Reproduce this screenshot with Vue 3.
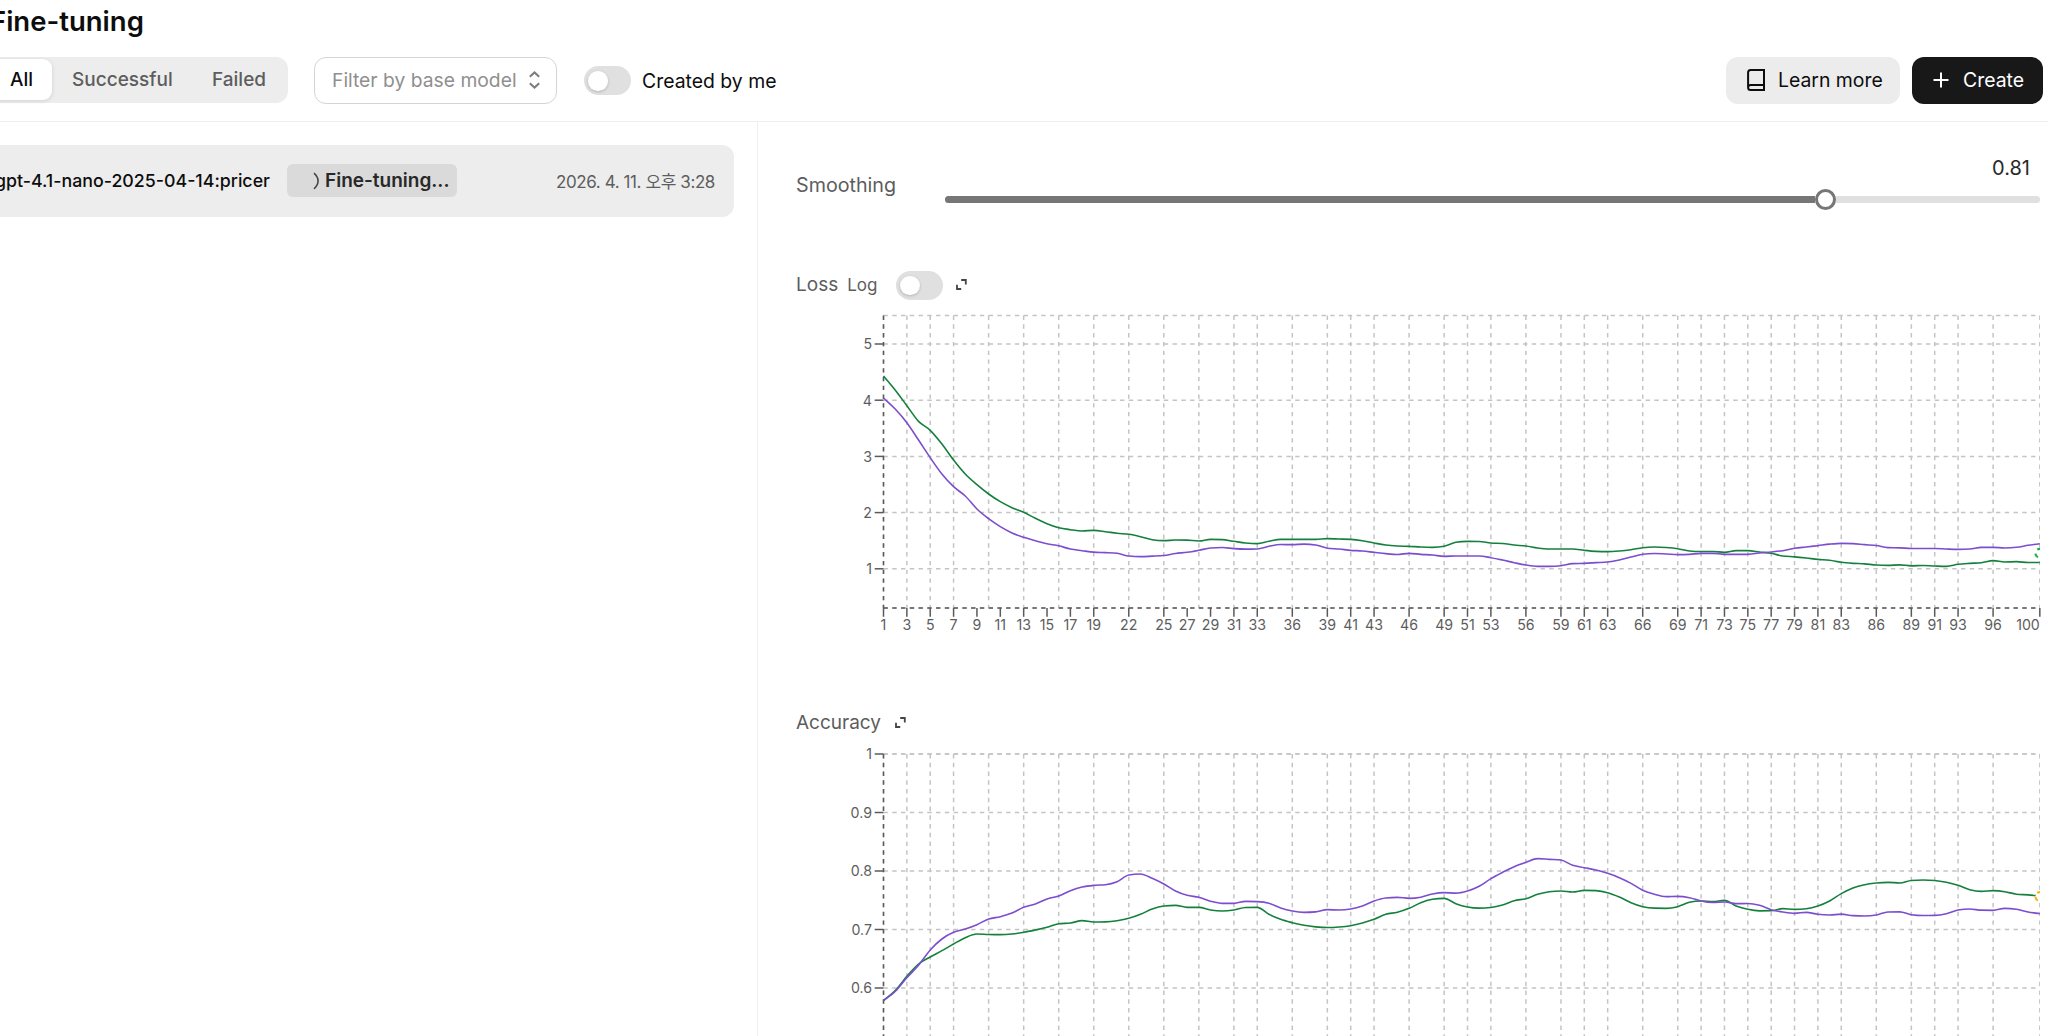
<script setup>
const lossTrain = [378,420,467,514,541,582,630,672,704,732,755,773,787,805,821,833,839,843,841,845,850,853,860,869,872,870,870.5,873,868,869,874,879,881,874,868,868,868,868,866,867,868,872,879,885,888,889,891,892,889,877,874,874.5,879,880.5,885,888,894,897,897,897,901,904,905,903,899,893,891,892.5,896,903,904.5,904.5,907,902,902,906,910,918,920.5,924,928,931,937,940,941.5,945,946,944.5,947.5,946.5,948,949,943,940,938,932,936,935,937.5,937.5]
const lossValid = [444,477,518,570,623,672,710,738,777,806,830,849,862,872.5,881.5,887.5,897,902,906.5,908,910,918,920,918.5,916.5,910.5,907,901,894,892.5,896,897.5,897,889,883.5,884,882.5,885,894.5,897,901,903,907,911,913.5,910,913,915,919,918,918,918,923,930,938,945,949,949,947,941,940,938,936,930,921,913,910.5,912,914,913,910,910,913,913,913,909,906,902,895,891,887,882.5,880,881,884,886.5,893,893.5,895.5,895.5,895.5,897,898,897,892,892,894,892,886,881]
const accTrain = [932,902,859,822,801,782,762,743,732,733.5,734,732,727,720,712,701,699,692,696,695.5,692,685,673,657,648,646,652,652,660,663,660,652.5,652,673,688,698,706,710.5,712.5,711,707,699,688,673,666.5,655,638,628,625,641,651,654.5,652.5,645,632,626,613,605,603,606,601,602,608,621,638,650,654.5,655,650,637,633,635,631,648,658,662.5,662,656,658,656,648,633,611,594,584,579,577,579,571.5,570,571.5,577,586,599,604,602,605,612.5,614.5,618]
const accValid = [932,904,863,826,780,747,727,717,704,687,680,669,652,642,627,618,602,591,586,584,575,555,552,565,582,603,616,622,633.5,640,640,634,635,640,654,663,667,665.5,659,660,657,648,633,624,622,625,621.5,612,608,609.5,603,589,566,547,530,517,506,508,510,526,533,540,550,563,580,601,613,620,619,623,633,637.5,636,641,640.5,646,659,666,670,667,673,675,672.5,677,678,675,666,665.5,674,676.5,676,671,660,657,660.5,661,655,658,666,671]

const gridSteps = [1,3,5,7,10,13,16,19,22,25,28,31,33,36,39,41,43,46,49,51,53,56,59,61,63,66,69,71,73,75,77,79,81,83,86,89,91,93,96,100]
const tickSteps = [1,3,5,7,9,11,13,15,17,19,22,25,27,29,31,33,36,39,41,43,46,49,51,53,56,59,61,63,66,69,71,73,75,77,79,81,83,86,89,91,93,96,100]

const STEP = 11.68
const LEFT = 87.5
const RIGHT = LEFT + 99 * STEP
const xOf = (step) => LEFT + (step - 1) * STEP

// Monotone cubic interpolation through evenly spaced samples
function curve(samples, offset) {
  const y = samples.map((v) => v / 3 - offset)
  const n = y.length
  const d = []
  for (let i = 0; i < n - 1; i++) d.push((y[i + 1] - y[i]) / STEP)
  const m = y.map((_, i) => {
    if (i === 0) return d[0]
    if (i === n - 1) return d[n - 2]
    if (d[i - 1] * d[i] <= 0) return 0
    return Math.sign(d[i]) * Math.min(Math.abs(d[i - 1]), Math.abs(d[i]), Math.abs(d[i - 1] + d[i]) / 4) * 2
  })
  let path = `M${LEFT},${y[0].toFixed(2)}`
  for (let i = 1; i < n; i++) {
    const x0 = xOf(i)
    const x1 = xOf(i + 1)
    const h = STEP / 3
    path += `C${(x0 + h).toFixed(2)},${(y[i - 1] + m[i - 1] * h).toFixed(2)} ${(x1 - h).toFixed(2)},${(y[i] - m[i] * h).toFixed(2)} ${x1.toFixed(2)},${y[i].toFixed(2)}`
  }
  return path
}

const charts = [
  {
    key: 'loss', title: 'Loss', log: true, top: 15.6, bottom: 308, height: 341, steps: tickSteps,
    ticks: [5, 4, 3, 2, 1].map((v) => ({ label: String(v), y: 325 - 56.2 * v })),
    train: curve(lossTrain, 50), valid: curve(lossValid, 50),
    dot: { y: 253.3, color: '#1fb14a' },
  },
  {
    key: 'acc', title: 'Accuracy', log: false, top: 16, bottom: 308.5, height: 298, steps: [],
    ticks: ['1', '0.9', '0.8', '0.7', '0.6'].map((label, i) => ({ label, y: 16 + 58.5 * i })),
    train: curve(accTrain, 48), valid: curve(accValid, 48),
    dot: { y: 158.6, color: '#f9b91c' },
  },
]
</script>

<template>
  <div class="page">
    <header class="header">
      <h1 class="title">Fine-tuning</h1>
      <div class="toolbar">
        <div class="tabs">
          <button class="tab active">All</button>
          <button class="tab successful">Successful</button>
          <button class="tab failed">Failed</button>
        </div>
        <button class="select">
          <span>Filter by base model</span>
          <svg width="13" height="18" viewBox="0 0 13 18"><path d="M1.8 5.8 6.5 1.4l4.7 4.4M1.8 12.2l4.7 4.4 4.7-4.4" /></svg>
        </button>
        <span class="switch"><i></i></span>
        <span class="mine">Created by me</span>
        <span class="spacer"></span>
        <button class="btn learn">
          <svg width="20" height="24" viewBox="0 0 20 24"><path d="M18 17H4.6a2.5 2.5 0 0 0-2.5 2.5M4.6 2H18v20H4.6a2.5 2.5 0 0 1-2.5-2.5v-15A2.5 2.5 0 0 1 4.6 2Z" /></svg>
          <span>Learn more</span>
        </button>
        <button class="btn create">
          <svg width="16" height="16" viewBox="0 0 16 16"><path d="M8 .5v15M.5 8h15" /></svg>
          <span>Create</span>
        </button>
      </div>
    </header>
    <main class="body">
      <section class="jobs">
        <div class="job">
          <span class="name">gpt-4.1-nano-2025-04-14:pricer</span>
          <span class="badge">
            <svg width="7" height="18" viewBox="0 0 7 18"><path d="M1 1.2c5.4 4.6 5.4 11 0 15.6" /></svg>
            <span>Fine-tuning...</span>
          </span>
          <span class="date">2026. 4. 11. 오후 3:28</span>
        </div>
      </section>
      <section class="metrics">
        <div class="smoothing">
          <span class="label">Smoothing</span>
          <div class="slider">
            <div class="value">0.81</div>
            <div class="track"><div class="fill"></div><div class="thumb"></div></div>
          </div>
        </div>
        <div v-for="c in charts" :key="c.key" class="chart" :class="c.key">
          <div class="chart-head">
            <span class="label">{{ c.title }}</span>
            <template v-if="c.log">
              <span class="log">Log</span>
              <span class="switch"><i></i></span>
            </template>
            <svg class="expand" width="11" height="11" viewBox="0 0 11 11"><path d="M5.2 1h4.6v4.4M1 5.8V10h4.2" /></svg>
          </div>
          <svg class="plot" width="1252" :height="c.height">
            <defs>
              <clipPath :id="'clip-' + c.key"><rect x="0" y="0" :width="RIGHT + 0.3" :height="c.height" /></clipPath>
            </defs>
            <g class="grid" :clip-path="`url(#clip-${c.key})`">
              <line v-for="s in gridSteps" :key="s" :x1="xOf(s)" :x2="xOf(s)" :y1="c.top" :y2="c.bottom" />
              <line :x1="LEFT" :x2="RIGHT" :y1="c.top" :y2="c.top" />
              <line v-for="t in c.ticks" :key="t.label" :x1="LEFT" :x2="RIGHT" :y1="t.y" :y2="t.y" />
              <line :x1="LEFT" :x2="RIGHT" :y1="c.bottom" :y2="c.bottom" />
            </g>
            <g class="axis">
              <line class="dashed" :x1="LEFT" :x2="LEFT" :y1="c.top" :y2="c.bottom" />
              <line class="dashed" :x1="LEFT" :x2="RIGHT" :y1="c.bottom" :y2="c.bottom" />
              <g v-for="t in c.ticks" :key="t.label">
                <line :x1="LEFT - 8.8" :x2="LEFT" :y1="t.y" :y2="t.y" />
                <text :x="LEFT - 11.5" :y="t.y + 5.3" text-anchor="end">{{ t.label }}</text>
              </g>
              <g v-for="s in c.steps" :key="s">
                <line :x1="xOf(s)" :x2="xOf(s)" :y1="c.bottom" :y2="c.bottom + 8.8" />
                <text :x="s === 100 ? RIGHT : xOf(s)" :y="c.bottom + 22.3" :text-anchor="s === 100 ? 'end' : 'middle'">{{ s }}</text>
              </g>
            </g>
            <g class="lines" :clip-path="`url(#clip-${c.key})`">
              <path class="train" :d="c.train" />
              <path class="valid" :d="c.valid" />
              <circle :cx="RIGHT" :cy="c.dot.y" r="4.4" :stroke="c.dot.color" />
            </g>
          </svg>
        </div>
      </section>
    </main>
  </div>
</template>

<style>
body { overflow: hidden; background: #fff; }
</style>

<style scoped>
.page { width: 2048px; height: 1036px; overflow: hidden; display: flex; flex-direction: column; background: #fff; color: #0d0d0d; font-family: Inter, "Noto Sans CJK KR", sans-serif; font-size: 19.2px; white-space: nowrap; }
.page * { box-sizing: border-box; }
button { font: inherit; border: 0; padding: 0; background: none; color: inherit; display: flex; align-items: center; }
.header { flex: none; height: 122px; border-bottom: 1px solid #efefef; }
.title { margin: 0 0 0 -10px; height: 57px; line-height: 42px; font-size: 27.5px; font-weight: 600; }
.toolbar { display: flex; align-items: center; height: 47px; padding-right: 5px; }
.tabs { flex: none; display: flex; width: 308px; height: 46px; margin: 0 0 1px -20px; padding: 2px 2px 3px; border-radius: 12px; background: #ededed; }
.tab { font-size: 19px; font-weight: 500; color: #5d5d5d; }
.tab.active { width: 70px; padding-left: 28px; border-radius: 9px; background: #fff; color: #0d0d0d; box-shadow: 0 1px 4px rgba(0, 0, 0, 0.12); }
.tab.successful { margin-left: 20px; width: 140px; }
.select { width: 243px; height: 47px; margin-left: 26px; padding: 0 0 1px 17px; border: 1.5px solid #d4d4d4; border-radius: 12px; color: #8f8f8f; font-size: 19.3px; }
.select svg { margin-left: auto; margin-right: 15px; fill: none; stroke: #7d7d7d; stroke-width: 2; }
.switch { flex: none; width: 47px; height: 29px; border-radius: 15px; background: #e0e0e0; padding: 5px 4px; }
.switch i { display: block; width: 19.5px; height: 19.5px; border-radius: 50%; background: #fff; box-shadow: 0 1px 3px rgba(0, 0, 0, 0.2); }
.toolbar .switch { margin-left: 27px; }
.mine { margin-left: 11px; font-size: 19.4px; }
.spacer { flex: 1; }
.btn { height: 47px; padding-bottom: 1px; border-radius: 12px; font-size: 19.4px; }
.btn svg { fill: none; stroke: currentColor; stroke-width: 2; }
.learn { width: 174px; padding-left: 20px; background: #ececec; }
.learn span { margin-left: 12px; }
.create { width: 131px; margin-left: 12px; padding-left: 21px; background: #181818; color: #fff; }
.create span { margin-left: 14px; }
.body { flex: 1; display: flex; min-height: 0; }
.jobs { flex: none; width: 758px; border-right: 1px solid #efefef; padding: 23px 23px 0 0; }
.job { display: flex; align-items: center; height: 72px; margin-left: -20px; padding: 0 19px 1px 15px; border-radius: 0 12px 12px 0; background: #ededed; }
.name { width: 292px; font-weight: 500; font-size: 17.8px; }
.badge { display: flex; align-items: center; width: 170px; height: 33px; padding-left: 26px; border-radius: 6px; background: #dadada; font-size: 19px; font-weight: 600; color: #282828; }
.badge svg { fill: none; stroke: #444; stroke-width: 1.6; margin-right: 5px; }
.date { margin-left: auto; font-size: 17px; letter-spacing: -0.4px; color: #5d5d5d; }
.metrics { flex: 1; padding-left: 38px; }
.label { color: #5d5d5d; }
.smoothing { display: flex; height: 148px; }
.smoothing .label { width: 149px; margin-top: 51px; line-height: 24px; font-size: 19.7px; }
.slider { width: 1095px; padding-top: 34px; }
.value { height: 39.5px; line-height: 24px; padding-right: 10px; text-align: right; font-size: 20px; color: #282828; }
.track { display: flex; align-items: center; height: 7px; border-radius: 4px; background: #e0e0e0; }
.fill { width: 870px; height: 7px; border-radius: 4px 0 0 4px; background: #767676; }
.thumb { flex: none; width: 21px; height: 21px; border: 3px solid #767676; border-radius: 50%; background: #fff; }
.chart { height: 438px; }
.chart-head { display: flex; align-items: center; height: 30px; }
.chart-head .label { font-size: 19px; padding-bottom: 1px; }
.log { margin-left: 9px; font-size: 17px; color: #5d5d5d; }
.chart .switch { margin-left: 19px; }
.expand { margin: 0 0 1px 13px; fill: none; stroke: #444; stroke-width: 1.8; }
.acc .expand { margin-left: 14px; }
.plot { display: block; }
.grid line { stroke: #c4c4c4; stroke-width: 1.5; stroke-dasharray: 4.38 4.38; }
.axis line { stroke: #5a5a5a; stroke-width: 1.5; }
.axis line.dashed { stroke-dasharray: 4.38 4.38; }
.axis text { fill: #5d5d5d; font-size: 14.2px; }
.lines path { fill: none; stroke-width: 1.6; }
.lines .train { stroke: #15803d; }
.lines .valid { stroke: #7c4dce; }
.lines circle { fill: #fff; stroke-width: 2.2; stroke-dasharray: 4.38 4.38; }
</style>
